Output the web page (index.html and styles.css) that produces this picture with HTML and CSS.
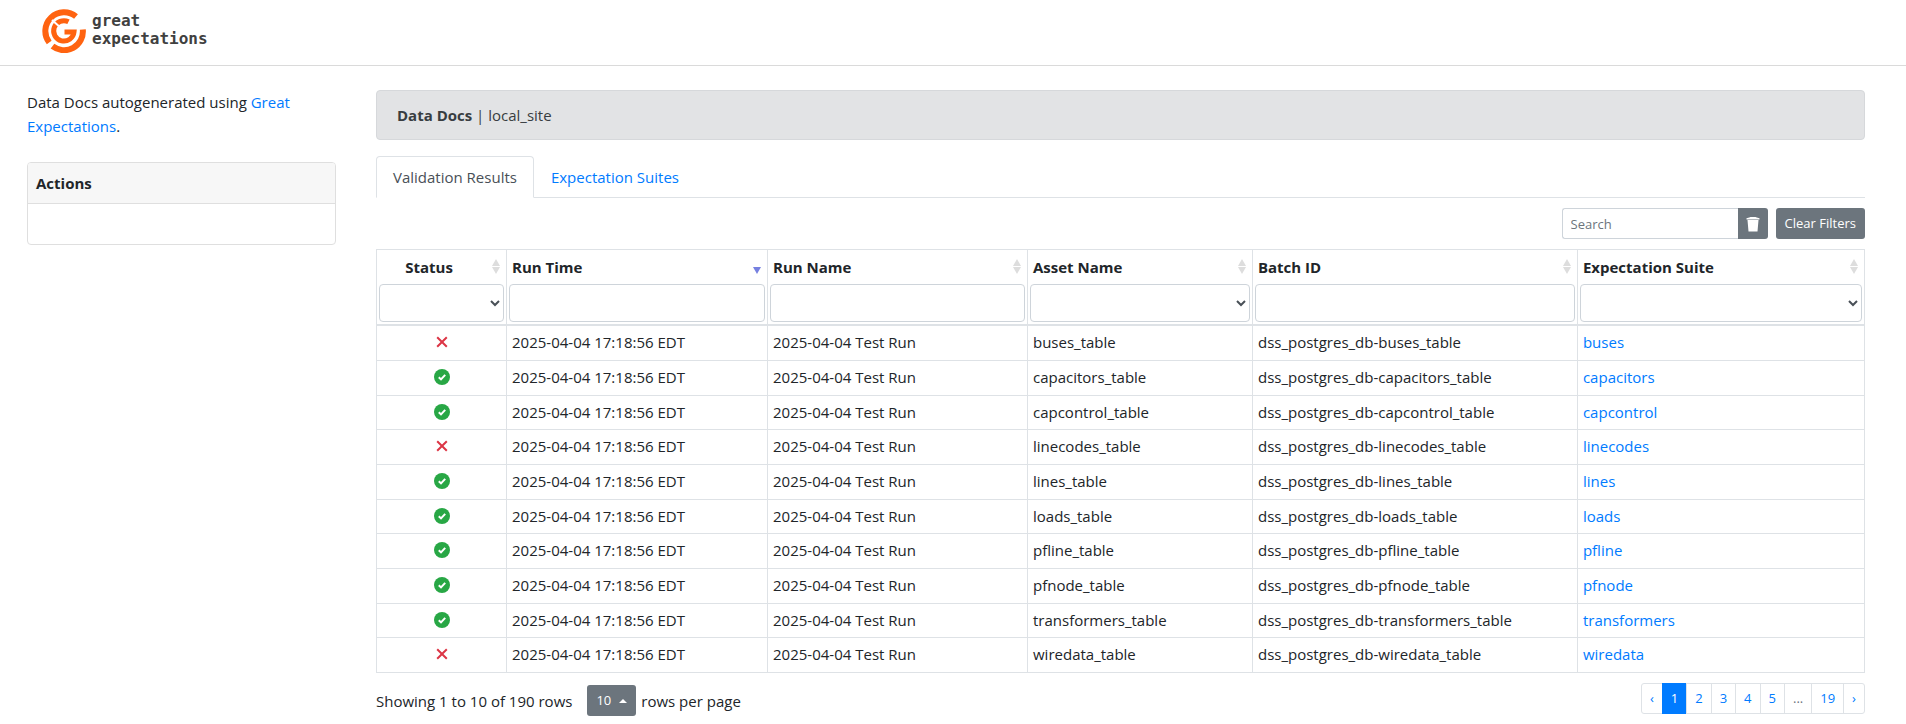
FILE: index.html
```html
<!DOCTYPE html>
<html lang="en">
<head>
<meta charset="utf-8">
<title>Data Docs | local_site</title>
<link rel="stylesheet" href="styles.css">
</head>
<body>
<svg class="defs" aria-hidden="true">
  <symbol id="ok" viewBox="0 0 16 16"><circle cx="8" cy="8" r="8" fill="#28a745"/><path d="M4.800 8.200l2.200 2.200 4.200-4.600" fill="none" stroke="#fff" stroke-width="2"/></symbol>
  <symbol id="fail" viewBox="0 0 16 16"><path d="M3.200 3.200l9.600 9.600M12.800 3.200l-9.600 9.600" fill="none" stroke="#dc3545" stroke-width="2"/></symbol>
</svg>
<header class="topbar">
  <a class="brand" href="#">
    <svg class="brand-mark" viewBox="0 0 44 44" aria-hidden="true">
      <g fill="none" stroke="#ff6310">
        <path d="M34 7.500A18.800 18.800 0 0 0 7.200 33.500" stroke-width="6"/>
        <path d="M10.500 37.200A18.800 18.800 0 0 0 40.800 20.500" stroke-width="6"/>
        <path d="M26.500 12.800A10.200 10.200 0 1 0 32 23H22.500" stroke-width="5"/>
      </g>
      <path d="M10 11l9 8" stroke="#fff" stroke-width="2"/>
    </svg>
    <span class="brand-name">great<br>expectations</span>
  </a>
</header>
<div class="layout">
  <aside>
    <p class="intro">Data Docs autogenerated using <a href="#">Great Expectations</a>.</p>
    <section class="card">
      <h2 class="card-title">Actions</h2>
      <div class="card-body"></div>
    </section>
  </aside>
  <main>
    <div class="crumb"><strong>Data Docs</strong> | local_site</div>
    <nav class="tabs">
      <a class="tab active" href="#">Validation Results</a>
      <a class="tab" href="#">Expectation Suites</a>
    </nav>
    <div class="toolbar">
      <div class="search">
        <input type="search" placeholder="Search" aria-label="Search">
        <button type="button" aria-label="Clear search"><svg width="14" height="16" viewBox="0 0 14 16" aria-hidden="true"><path d="M.5 2.200Q4 1.600 4.500 1h5Q10 1.600 13.500 2.200V3.500H.5zM1.500 4h11l-1 11.500h-9z" fill="#fff"/></svg></button>
      </div>
      <button class="btn" type="button">Clear Filters</button>
    </div>
    <table class="results">
      <colgroup><col class="c1"><col class="c2"><col class="c3"><col class="c4"><col class="c5"><col class="c6"></colgroup>
      <thead><tr>
        <th class="status"><div class="label">Status</div><select aria-label="Status"><option></option></select></th>
        <th><div class="label desc">Run Time</div><input type="text" aria-label="Run Time"></th>
        <th><div class="label">Run Name</div><input type="text" aria-label="Run Name"></th>
        <th><div class="label">Asset Name</div><select aria-label="Asset Name"><option></option></select></th>
        <th><div class="label">Batch ID</div><input type="text" aria-label="Batch ID"></th>
        <th><div class="label">Expectation Suite</div><select aria-label="Expectation Suite"><option></option></select></th>
      </tr></thead>
      <tbody id="rows"></tbody>
    </table>
    <footer class="pager">
      <div class="pager-info">
        <span>Showing 1 to 10 of 190 rows</span>
        <button class="btn size" type="button">10 <span class="caret"></span></button>
        <span>rows per page</span>
      </div>
      <nav class="pages" aria-label="Pages">
        <a href="#">‹</a><a class="current" href="#">1</a><a href="#">2</a><a href="#">3</a><a href="#">4</a><a href="#">5</a><span>...</span><a href="#">19</a><a href="#">›</a>
      </nav>
    </footer>
  </main>
</div>
<script src="rows.js"></script>
</body>
</html>
```
FILE: styles.css
```css
* { box-sizing: border-box; }
body { margin: 0; background: #fff; color: #212529; font: 15px/24px "Open Sans", "Noto Sans", sans-serif; }
a { color: #007bff; text-decoration: none; }
input, select, button { font: inherit; color: #495057; margin: 0; }
.defs { display: none; }

.topbar { display: flex; padding: 9px 42px 12px; border-bottom: 1px solid #dadada; }
.brand { display: flex; gap: 6px; color: #404040; }
.brand-mark { width: 44px; height: 44px; }
.brand-name { padding-top: 3px; font: bold 16px/18px "DejaVu Sans Mono", monospace; }

.layout { display: grid; grid-template-columns: minmax(0, 309fr) minmax(0, 1489fr); gap: 40px; padding: 24px 41px 0 27px; }
.intro { margin: 0 0 24px; }
.card { border: 1px solid #dfdfdf; border-radius: 4px; }
.card-title { margin: 0; padding: 8px; background: #f7f7f7; border-bottom: 1px solid #dfdfdf; border-radius: 3px 3px 0 0; font-size: 15px; line-height: 24px; }
.card-body { padding: 20px; }

.crumb { padding: 12px 20px; border: 1px solid #d6d8db; border-radius: 4px; background: #e2e3e5; color: #383d41; }
.tabs { display: flex; margin-top: 16px; border-bottom: 1px solid #dee2e6; }
.tab { margin-bottom: -1px; padding: 8px 16px; border: 1px solid transparent; border-radius: 4px 4px 0 0; }
.tab.active { color: #495057; background: #fff; border-color: #dee2e6 #dee2e6 #fff; }

.toolbar { display: flex; justify-content: flex-end; gap: 8px; padding: 10px 0; }
.search { display: flex; }
.search input { width: 176px; padding: 5px 8px 4px; border: 1px solid #ced4da; border-right: 0; border-radius: 3px 0 0 3px; font-size: 13px; line-height: 20px; appearance: none; outline: none; }
.search input::placeholder { color: #6c757d; }
.search button { display: flex; align-items: center; justify-content: center; width: 30px; padding: 0; border: 0; border-radius: 0 3px 3px 0; background: #6c757d; }
.btn { padding: 5px 9px; border: 0; border-radius: 3px; background: #6c757d; color: #fff; font-size: 13px; line-height: 21px; }

.results { width: 100%; table-layout: fixed; border-collapse: collapse; }
.results th, .results td { border: 1px solid #dee2e6; text-align: left; }
.results th { padding: 0 2px 2px; border-bottom-width: 2px; }
.results td { padding: 4px 5px 6px; }
.results tr:nth-child(3n) td { padding-bottom: 5px; }
.results .status { text-align: center; }
.results th select, .results th input { display: block; width: 100%; height: 38px; padding: 6px 0; border: 1px solid #ced4da; border-radius: 4px; background: #fff; }
.c1 { width: 8.74%; }
.c2 { width: 17.54%; }
.c3 { width: 17.47%; }
.c4 { width: 15.12%; }
.c5 { width: 21.84%; }
.c6 { width: 19.29%; }
.label { position: relative; padding: 5px 28px 5px 3px; }
.label::before, .label::after { content: ""; position: absolute; right: 4px; border: 4px solid transparent; }
.label::before { top: 9px; border-top: 0; border-bottom: 7px solid #ddd; }
.label::after { top: 17px; border-bottom: 0; border-top: 7px solid #ddd; }
.label.desc::before { content: none; }
.label.desc::after { border-top-color: #7680e0; }
.mark { display: block; width: 16px; height: 16px; margin: 0 auto; }

.pager { display: flex; justify-content: space-between; align-items: flex-start; padding-top: 10px; }
.pager-info { display: flex; align-items: center; gap: 5px; padding-top: 2px; }
.size { display: flex; align-items: center; gap: 8px; margin-left: 10px; }
.caret { border: 4px solid transparent; border-top: 0; border-bottom-color: #fff; }
.pages { display: flex; font-size: 13px; line-height: 21px; }
.pages > * { padding: 4px 8px; border: 1px solid #dee2e6; margin-left: -1px; }
.pages > :first-child { border-radius: 3px 0 0 3px; }
.pages > :last-child { border-radius: 0 3px 3px 0; }
.pages span { color: #6c757d; }
.pages .current { background: #007bff; border-color: #007bff; color: #fff; }
```
FILE: rows.js
```js
const suites = [
  ["buses", false], ["capacitors", true], ["capcontrol", true], ["linecodes", false], ["lines", true],
  ["loads", true], ["pfline", true], ["pfnode", true], ["transformers", true], ["wiredata", false]
];
document.getElementById("rows").innerHTML = suites.map(([name, ok]) => `
  <tr>
    <td class="status"><svg class="mark" role="img" aria-label="${ok ? "Succeeded" : "Failed"}"><use href="#${ok ? "ok" : "fail"}"/></svg></td>
    <td>2025-04-04 17:18:56 EDT</td>
    <td>2025-04-04 Test Run</td>
    <td>${name}_table</td>
    <td>dss_postgres_db-${name}_table</td>
    <td><a href="#">${name}</a></td>
  </tr>`).join("");
```
